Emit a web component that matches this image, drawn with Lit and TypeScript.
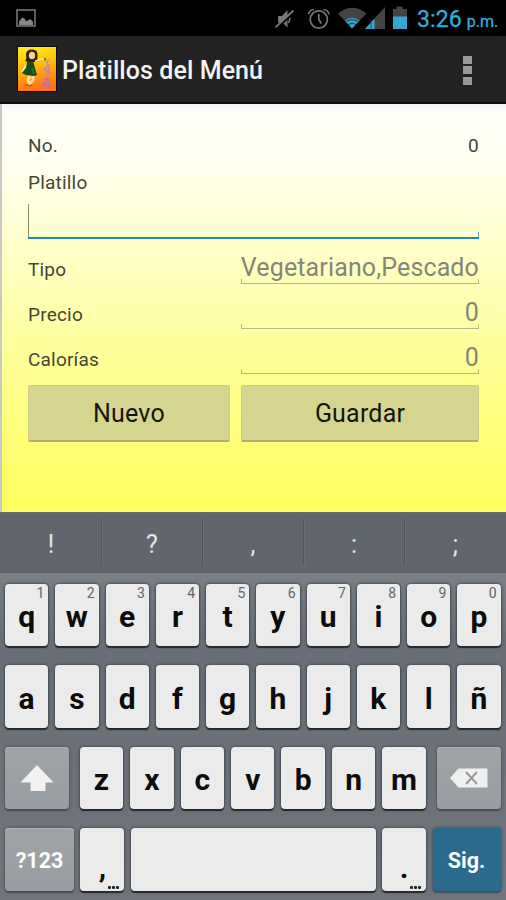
import { LitElement, html, css } from "lit";
import { customElement, property } from "lit/decorators.js";

@customElement("status-bar")
class StatusBar extends LitElement {
  static styles = css`
    :host { display: flex; height: 36px; background: #000; align-items: center; justify-content: space-between; }
    svg { display: block; }
    .note { margin-left: 16px; }
    .right { display: flex; align-items: center; height: 36px; }
    .clock { color: #33acdb; font-size: 23px; -webkit-text-stroke: 0.300px #33acdb; line-height: 36px; width: 81px; margin-left: 10px; margin-right: 8px; padding-top: 3px; height: 39px; white-space: nowrap; box-sizing: border-box; letter-spacing: 0.100px; }
    .clock small { font-size: 16px; margin-left: 5px; letter-spacing: 0; }
  `;
  render() {
    return html`
      <svg class="note" width="20" height="18" viewBox="0 0 20 18">
        <rect x="1" y="1" width="18" height="16" fill="none" stroke="#858585" stroke-width="1.400" />
        <path d="M3 16V12.500l1.500-2 2-2 2 1 1.500 2.500 2-.500 2-1.500 3 2.500V16z" fill="#858585" />
      </svg>
      <div class="right">
        <svg width="132" height="36" viewBox="275 0 132 36">
          <path d="M278 16h4l5.500-6v17.500l-5-5h-4.500z" fill="#777" />
          <path d="M288.500 15.500q2.500 3.500 0 7.500" fill="none" stroke="#777" stroke-width="1.600" />
          <path d="M276.500 28.500L294.500 12" stroke="#000" stroke-width="2" />
          <path d="M275.500 27.300L293.500 10.500" stroke="#777" stroke-width="1.800" />
          <g fill="none" stroke="#777" stroke-width="1.700">
            <circle cx="318.800" cy="19.500" r="8.600" />
            <path d="M318.800 14v5.500l2.500 4M308.600 14.200a6 6 0 0 1 5.500-4.700M329 14.200a6 6 0 0 0-5.500-4.700" />
          </g>
          <path d="M338 13.500Q352 2 366.500 13.500L352 28.500z" fill="#444" />
          <path d="M345 20.800Q352 14.800 359.500 20.800L352 28.500z" fill="#33a5d0" />
          <path d="M346.500 21.500Q352 17.800 358 21.500M348.500 24.500Q352 22 356 24.500" fill="none" stroke="#1c3440" stroke-width="1" />
          <path d="M385 7v22h-20z" fill="#444" />
          <path d="M374.500 18.500v10.500h-9.500z" fill="#33a5d0" />
          <path d="M371 20v9" stroke="#1c5068" stroke-width="1" />
          <path d="M393 9h3.500V6.500h6V9h4.500v20h-14z" fill="#444" />
          <path d="M393 16.500h14V29h-14z" fill="#33a5d0" />
        </svg>
        <div class="clock">3:26<small>p.m.</small></div>
      </div>`;
  }
}

@customElement("action-bar")
class ActionBar extends LitElement {
  static styles = css`
    :host { display: flex; align-items: center; height: 68px; box-sizing: border-box; background: #222; border-bottom: 2px solid #0c0c0c; padding: 0 34px 0 17px; }
    .logo { display: block; }
    .title { flex: 1; color: #f3f3f3; font-weight: 500; font-size: 25px; letter-spacing: 0.080px; line-height: 30px; padding-left: 5px; padding-top: 4px; white-space: nowrap; }
    .more { display: flex; flex-direction: column; gap: 2.500px; padding-top: 2px; }
    .dot { width: 9px; height: 8px; background: #999; }
  `;
  render() {
    return html`
      <svg class="logo" width="40" height="46" viewBox="0 0 40 46">
        <defs>
          <linearGradient id="sun" x1="0" y1="0" x2="0.200" y2="1">
            <stop offset="0" stop-color="#fff01a" /><stop offset="0.500" stop-color="#ffb90a" /><stop offset="1" stop-color="#ff7418" />
          </linearGradient>
        </defs>
        <rect width="40" height="46" fill="#0b0b1c" />
        <rect x="1" y="1" width="38" height="44" fill="url(#sun)" />
        <path d="M8 15q2-2 1-6 0-5.500 6-5.500t5.500 6q-.500 4 .500 5.500l-3 1h-7z" fill="#3a1d0c" />
        <ellipse cx="15" cy="9.500" rx="3.200" ry="3.800" fill="#f4cf86" />
        <path d="M18 15.500l5-2.500 6 0M10 18l-5 8" stroke="#ffe6ac" stroke-width="1.600" fill="none" />
        <path d="M10 16l6-1 2 7 2 7-3 1-8-1-4-2 4-5z" fill="#174d16" />
        <path d="M15 22l2 6" stroke="#2f7a2a" stroke-width="1.600" />
        <path d="M13 30l-2 4 1 3M16 30l0 4-4 5" stroke="#ffdf9c" stroke-width="2.800" fill="none" />
        <path d="M8 38.500l4 1M12 40l3-1" stroke="#b4601c" stroke-width="1.400" />
        <path d="M27.500 12l1 2.500" stroke="#2a6a30" stroke-width="1.500" />
        <path d="M32 14q-3 2-2 5t-2 3 3 3-2 3M32 18v7M27 24q4-1 3 4" stroke="#c88aa6" stroke-width="1.500" fill="none" />
        <path d="M27 34q5-3 4 1t-5 5q0-4 3-3t3 4" stroke="#c86ab4" stroke-width="2" fill="none" />
      </svg>
      <div class="title">Platillos del Menú</div>
      <div class="more"><div class="dot"></div><div class="dot"></div><div class="dot"></div></div>`;
  }
}

@customElement("dish-form")
class DishForm extends LitElement {
  static styles = css`
    :host { display: block; height: 408px; box-sizing: border-box; border-left: 2px solid #c9c9c4; padding: 23px 27px 0 26px;
      background: linear-gradient(#f4f4f4 0, #fffffa 9px, #ffffef 60px, #ffffb5 190px, #ffff8a 285px, #ffff5e 100%); }
    .row { display: flex; justify-content: space-between; height: 37px; line-height: 37px; }
    .label { font-size: 19px; color: #45453a; white-space: nowrap; letter-spacing: 0.200px; }
    .name { height: 38px; box-sizing: border-box; border-bottom: 2px solid #1f8ab4; display: flex; align-items: flex-end; justify-content: space-between; }
    .caret { width: 1px; height: 33px; background: #8b8b68; }
    .tick { width: 1px; height: 5px; background: #6aa9b0; }
    .pair { display: grid; grid-template-columns: 202px 238px; column-gap: 11px; height: 45px; }
    .pair .label { padding-top: 20px; line-height: 22px; }
    .value { align-self: end; height: 32px; text-align: right; font-size: 25px; letter-spacing: 0.130px; color: #85857a; white-space: nowrap; display: flex; flex-direction: column; align-items: flex-end; }
    .text { height: 27px; line-height: 32px; }
    .rail { width: 100%; box-sizing: border-box; height: 5px; border: 1px solid #b9b985; border-top: 0; }
    .buttons { display: grid; grid-template-columns: 202px 238px; column-gap: 11px; margin-top: 11px; }
    .btn { height: 57px; box-sizing: border-box; padding-top: 1px; text-align: center; font-size: 25px; letter-spacing: 0.200px; color: #15150c; background: #d6d58f; border: 1px solid #cccb8a; border-bottom: 2px solid #b0af70; border-radius: 2px; display: flex; justify-content: center; align-items: center; }
  `;
  pair(label: string, value: string) {
    return html`<div class="pair"><div class="label">${label}</div>
      <div class="value"><div class="text">${value}</div><div class="rail"></div></div></div>`;
  }
  render() {
    return html`
      <div class="row"><div class="label">No.</div><div class="label">0</div></div>
      <div class="row"><div class="label">Platillo</div></div>
      <div class="name"><div class="caret"></div><div class="tick"></div></div>
      ${this.pair("Tipo", "Vegetariano,Pescado")}
      ${this.pair("Precio", "0")}
      ${this.pair("Calorías", "0")}
      <div class="buttons"><div class="btn">Nuevo</div><div class="btn">Guardar</div></div>`;
  }
}

@customElement("key-cap")
class KeyCap extends LitElement {
  @property() label = "";
  @property() hint = "";
  @property({ reflect: true }) kind = "";
  static styles = css`
    :host { display: flex; position: relative; align-items: center; justify-content: center; box-sizing: border-box; height: 62.500px;
      border-radius: 4px; background: #ebebeb; color: #0c0c0c; font-weight: 700; box-shadow: 0 1.500px 1px #25282c, 0 0 2.500px 1px #4b5057; }
    :host([kind="fn"]) { background: linear-gradient(#a0a4a7, #989da1); color: #fff; box-shadow: 0 1.500px 1px #4a4e54, 0 0 2.500px 1px #555a62, inset 0 1px 0 #b2b5b8; }
    :host([kind="go"]) { background: #2a6a8d; color: #fff; box-shadow: 0 1.500px 1px #464e56, 0 0 2.500px 1px #4d565f; }
    .letter { font-size: 30px; line-height: 36px; padding-top: 5px; }
    .word { font-size: 21.500px; padding-top: 2px; }
    .hint { position: absolute; top: 1px; right: 4px; font-size: 14px; line-height: 16px; font-weight: 400; color: #666; }
    .low { padding-top: 16px; }
    .more { position: absolute; right: 5px; bottom: 2px; display: flex; gap: 1px; }
    .pt { width: 3px; height: 3px; background: #222; border-radius: 1px; }
    svg { display: block; }
  `;
  render() {
    if (this.label === "shift")
      return html`<svg width="34" height="28" viewBox="0 0 34 28"><path d="M17 1L33.500 18.500H25.500V27H10.500V18.500H.500z" fill="#f2f2f2" /></svg>`;
    if (this.label === "delete")
      return html`<svg width="38" height="20" viewBox="0 0 38 20"><path d="M0 10L8.500.500H37.500V19.500H8.500z" fill="#f0f0f0" /><path d="M16 4l11 12M27 4L16 16" stroke="#96999c" stroke-width="2" /></svg>`;
    const extra = this.label === "," || this.label === ".";
    return html`
      <div class="${this.kind ? "word" : "letter"} ${extra ? "low" : ""}">${this.label}</div>
      ${this.hint ? html`<div class="hint">${this.hint}</div>` : ""}
      ${extra ? html`<div class="more"><div class="pt"></div><div class="pt"></div><div class="pt"></div></div>` : ""}`;
  }
}

@customElement("soft-keyboard")
class SoftKeyboard extends LitElement {
  static styles = css`
    :host { display: flex; flex-direction: column; height: 388px; background: linear-gradient(#7b8087 61px, #6a6f77 130px, #70757c 100%); }
    .strip { display: grid; grid-template-columns: repeat(5, 1fr); height: 61px; box-sizing: border-box; background: linear-gradient(#6a6a6e 0, #61656e 3px, #61656e 100%); border-bottom: 1px solid #5c6068; align-items: center; padding-left: 1px; }
    .mark { height: 46px; line-height: 51px; text-align: center; color: #e6e6e6; font-size: 25px; border-right: 1px solid #50545c; box-shadow: 1px 0 0 #6b6f77; }
    .mark:last-child { border: 0; box-shadow: none; }
    .keys { display: flex; flex-direction: column; gap: 19.100px; padding: 10.500px 5.500px 0 5px; }
    .ten { display: grid; grid-template-columns: repeat(10, 1fr); gap: 7px; }
    .shifted { display: flex; justify-content: space-between; }
    .mid { display: grid; grid-template-columns: repeat(7, 1fr); gap: 7px; width: 346px; }
    .wide { width: 64px; }
    .last { display: grid; grid-template-columns: 69px 44px 245px 44px 68px; justify-content: space-between; }
  `;
  render() {
    return html`
      <div class="strip">${["!", "?", ",", ":", ";"].map((m) => html`<div class="mark">${m}</div>`)}</div>
      <div class="keys">
        <div class="ten">${[..."qwertyuiop"].map((k, i) => html`<key-cap label=${k} hint=${String((i + 1) % 10)}></key-cap>`)}</div>
        <div class="ten">${[..."asdfghjklñ"].map((k) => html`<key-cap label=${k}></key-cap>`)}</div>
        <div class="shifted">
          <key-cap class="wide" kind="fn" label="shift"></key-cap>
          <div class="mid">${[..."zxcvbnm"].map((k) => html`<key-cap label=${k}></key-cap>`)}</div>
          <key-cap class="wide" kind="fn" label="delete"></key-cap>
        </div>
        <div class="last">
          <key-cap kind="fn" label="?123"></key-cap>
          <key-cap label=","></key-cap>
          <key-cap></key-cap>
          <key-cap label="."></key-cap>
          <key-cap kind="go" label="Sig."></key-cap>
        </div>
      </div>`;
  }
}

@customElement("app-root")
class AppRoot extends LitElement {
  static styles = css`
    :host { display: block; width: 506px; height: 900px; overflow: hidden; font-family: Roboto, "Liberation Sans", sans-serif; }
  `;
  render() {
    return html`<status-bar></status-bar><action-bar></action-bar><dish-form></dish-form><soft-keyboard></soft-keyboard>`;
  }
}
